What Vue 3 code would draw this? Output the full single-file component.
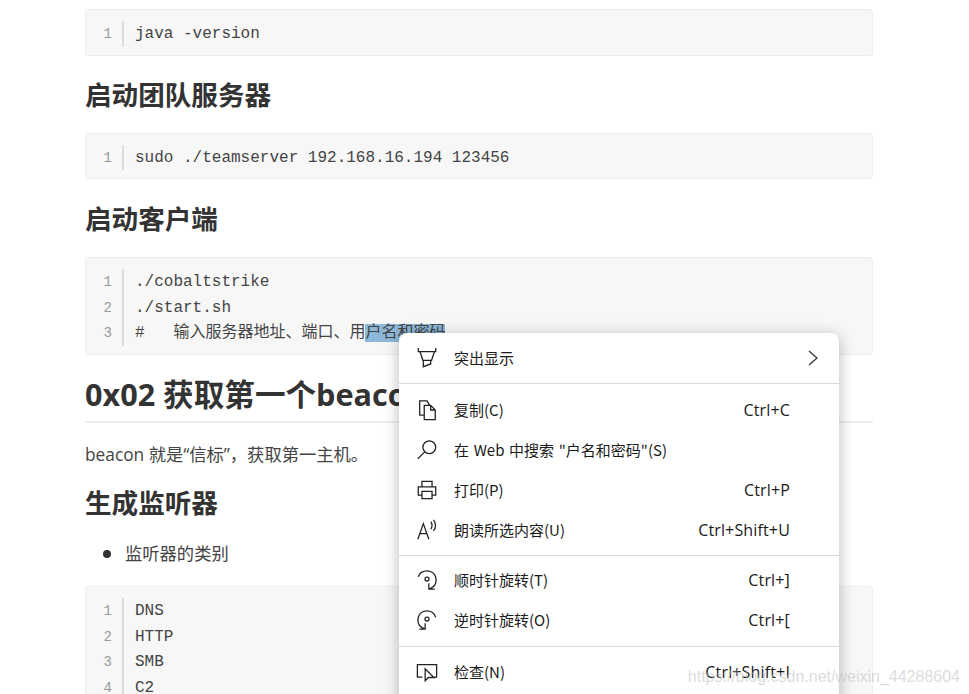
<script setup>
const blocks = {
  java: ['java -version'],
  team: ['sudo ./teamserver 192.168.16.194 123456'],
  listeners: ['DNS', 'HTTP', 'SMB', 'C2'],
}
const hashPrefix = '#   输入服务器地址、端口、用'
</script>

<template>
  <div class="page">
    <article class="doc">
      <div class="code first">
        <div class="gutter"><span v-for="(l, i) in blocks.java" :key="i">{{ i + 1 }}</span></div>
        <div class="lines"><span v-for="(l, i) in blocks.java" :key="i">{{ l }}</span></div>
      </div>
      <h2 class="h-a">启动团队服务器</h2>
      <div class="code">
        <div class="gutter"><span v-for="(l, i) in blocks.team" :key="i">{{ i + 1 }}</span></div>
        <div class="lines"><span v-for="(l, i) in blocks.team" :key="i">{{ l }}</span></div>
      </div>
      <h2 class="h-a">启动客户端</h2>
      <div class="code">
        <div class="gutter"><span>1</span><span>2</span><span>3</span></div>
        <div class="lines">
          <span>./cobaltstrike</span>
          <span>./start.sh</span>
          <span>{{ hashPrefix }}<mark class="sel">户名和密码</mark></span>
        </div>
      </div>
      <h1>0x02 获取第一个beacon</h1>
      <p>beacon 就是“信标”，获取第一主机。</p>
      <h2 class="h-b">生成监听器</h2>
      <ul><li>监听器的类别</li></ul>
      <div class="code">
        <div class="gutter"><span v-for="(l, i) in blocks.listeners" :key="i">{{ i + 1 }}</span></div>
        <div class="lines"><span v-for="(l, i) in blocks.listeners" :key="i">{{ l }}</span></div>
      </div>
    </article>

    <div class="menu">
      <div class="item top">
        <svg class="ico" viewBox="0 0 24 24"><path d="M2.500 1v4h19V1M4.500 5.500l3 9h9.500l3-9M8 14.500v7l8-3v-4" /></svg>
        <span class="label">突出显示</span>
        <svg class="chev" viewBox="0 0 10 16"><path d="M1 1l8 7-8 7" /></svg>
      </div>
      <div class="sep s1"></div>
      <div class="item">
        <svg class="ico" viewBox="0 0 24 24"><path d="M9 17.500H4V2h8l3 5M9 7h7l5 5v10.500H9zM16 7v5h5" /></svg>
        <span class="label">复制(C)</span><span class="key">Ctrl+C</span>
      </div>
      <div class="item">
        <svg class="ico" viewBox="0 0 24 24"><circle cx="14.500" cy="9" r="7" /><path d="M9.500 14L2 21.500" /></svg>
        <span class="label search">在 Web 中搜索 "户名和密码"(S)</span>
      </div>
      <div class="item">
        <svg class="ico" viewBox="0 0 24 24"><path d="M6.500 8V2.500h11V8M6.500 17.500H2.500V8.500h19v9h-4M6.500 13.500h11v8h-11z" /></svg>
        <span class="label">打印(P)</span><span class="key">Ctrl+P</span>
      </div>
      <div class="item">
        <svg class="ico" viewBox="0 0 24 24"><path d="M2 22l6-17 6 17M4.500 16h7M16 3c2 2 2 6 0 8M19 1c3 3 3 9 0 12" /></svg>
        <span class="label">朗读所选内容(U)</span><span class="key">Ctrl+Shift+U</span>
      </div>
      <div class="sep s2"></div>
      <div class="item">
        <svg class="ico" viewBox="0 0 24 24"><path d="M2.500 8.500C4 4 8 2 12 2c6 0 10 4 10 10 0 5-3 8-7 9.500M14 15.500v6.500h6.500" /><circle cx="12" cy="11" r="2.200" /></svg>
        <span class="label">顺时针旋转(T)</span><span class="key">Ctrl+]</span>
      </div>
      <div class="item">
        <svg class="ico" viewBox="0 0 24 24"><path d="M21.500 9C20 4.500 16 2 12 2 6 2 2 6 2 12c0 5 3 8 7 9.500M10 15.500v6.500H3.500" /><circle cx="12" cy="11" r="2.200" /></svg>
        <span class="label">逆时针旋转(O)</span><span class="key">Ctrl+[</span>
      </div>
      <div class="sep s3"></div>
      <div class="item">
        <svg class="ico" viewBox="0 0 24 24"><path d="M7 17.500H1.500V4h21v13.500H19M10 8.500l0 13 3.500-3.500h6z" /></svg>
        <span class="label">检查(N)</span><span class="key">Ctrl+Shift+I</span>
      </div>
    </div>

    <div class="mark">https://blog.csdn.net/weixin_44288604</div>
  </div>
</template>

<style>
html, body { margin: 0; background: #fff; overflow: hidden; }
</style>

<style scoped>
.page {
  position: relative;
  width: 969px;
  height: 694px;
  overflow: hidden;
  background: #fff;
  color: #333;
  font-family: "Open Sans", "Noto Sans CJK SC", sans-serif;
}
.doc {
  width: 788px;
  margin-left: 85px;
  padding-top: 9px;
}
.code {
  display: flex;
  box-sizing: border-box;
  padding: 11px 0 8px;
  background: #f7f7f7;
  border: 1px solid #eeeeee;
  border-radius: 3px;
  font-family: "Liberation Mono", "Noto Sans CJK SC", monospace;
  font-size: 16px;
  line-height: 25.500px;
}
.gutter {
  display: flex;
  flex-direction: column;
  box-sizing: border-box;
  width: 38px;
  padding-right: 10px;
  border-right: 2px solid #dddddd;
  text-align: right;
  font-size: 14px;
  color: #999;
}
.gutter span { position: relative; top: 1px; }
.lines {
  display: flex;
  flex-direction: column;
  padding: 1px 0 0 11px;
  margin-bottom: -1px;
  white-space: pre;
  color: #444;
}
.sel {
  background: #8db8da;
  color: #444;
}
h2 {
  margin: 0;
  font-size: 26.600px;
  line-height: 40px;
  font-weight: 600;
  color: #333;
}
.h-a { margin: 20px 0 18px; }
.first + .h-a { margin-top: 19px; }
.h-b { margin: 15px 0 18px; }
h1 {
  margin: 17px 0 19px;
  padding-bottom: 5px;
  border-bottom: 2px solid #eeeeee;
  font-size: 30.600px;
  line-height: 44px;
  font-weight: 700;
  color: #333;
}
p {
  margin: 0;
  font-size: 17.300px;
  line-height: 26px;
  color: #444;
}
ul {
  margin: 0 0 19.500px;
  padding-left: 18px;
  list-style: none;
  font-size: 17.300px;
  line-height: 26px;
  color: #444;
}
li {
  display: flex;
  align-items: center;
  gap: 14px;
}
li::before {
  content: "";
  width: 8px;
  height: 8px;
  border-radius: 50%;
  background: #333;
}
.menu {
  position: absolute;
  left: 399px;
  top: 333px;
  width: 440px;
  height: 380px;
  background: #fff;
  border-radius: 8px;
  box-shadow: 0 3px 16px rgba(0, 0, 0, 0.28);
  font-family: "Noto Sans CJK SC", "Noto Sans", sans-serif;
  font-size: 15px;
  color: #1a1a1a;
}
.item {
  display: flex;
  align-items: center;
  height: 40px;
  padding: 0 49px 0 17px;
}
.top { height: 50px; padding-right: 21px; }
.ico {
  width: 22px;
  height: 22px;
  margin-right: 16px;
  flex: none;
  fill: none;
  stroke: #222;
  stroke-width: 1.400;
}
.label { flex: 1; white-space: nowrap; margin-bottom: 1px; }
.search { word-spacing: 1.300px; }
.key {
  font-family: "Open Sans", sans-serif;
  font-size: 16px;
  letter-spacing: 0.150px;
  white-space: nowrap;
}
.chev {
  width: 10px;
  height: 16px;
  fill: none;
  stroke: #333;
  stroke-width: 1.300;
}
.sep {
  height: 1px;
  background: #d9d9d9;
}
.s1 { margin: 0 0 6px; }
.s2 { margin: 5px 0 4px; }
.s3 { margin: 6px 0 5px; }
.mark {
  position: absolute;
  right: 9px;
  top: 667px;
  font-family: "Liberation Sans", sans-serif;
  font-size: 16px;
  line-height: 20px;
  color: rgba(190, 190, 190, 0.55);
}
</style>
